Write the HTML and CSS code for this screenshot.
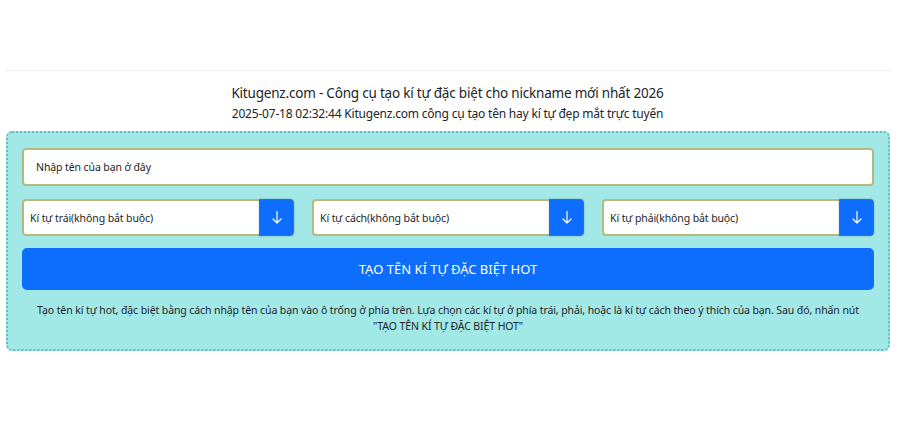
FILE: index.html
```html
<!DOCTYPE html>
<html lang="vi">
<head>
<meta charset="utf-8">
<title>Kitugenz.com</title>
<link rel="stylesheet" href="styles.css">
</head>
<body>
<div class="page">
  <hr class="rule">
  <h1 class="title">Kitugenz.com - Công cụ tạo kí tự đặc biệt cho nickname mới nhất 2026</h1>
  <p class="subtitle">2025-07-18 02:32:44 Kitugenz.com công cụ tạo tên hay kí tự đẹp mắt trực tuyến</p>
  <div class="tool">
    <input class="name-input" type="text" placeholder="Nhập tên của bạn ở đây">
    <div class="selects">
      <div class="group">
        <input class="field" type="text" placeholder="Kí tự trái(không bắt buộc)">
        <button class="arrow"><svg class="arrow-icon" viewBox="0 0 10 13" width="10" height="13"><path d="M5 0.5V12M1 8l4 4 4-4" fill="none" stroke="#fff" stroke-width="1.2" stroke-linecap="round" stroke-linejoin="round"/></svg></button>
      </div>
      <div class="group">
        <input class="field" type="text" placeholder="Kí tự cách(không bắt buộc)">
        <button class="arrow"><svg class="arrow-icon" viewBox="0 0 10 13" width="10" height="13"><path d="M5 0.5V12M1 8l4 4 4-4" fill="none" stroke="#fff" stroke-width="1.2" stroke-linecap="round" stroke-linejoin="round"/></svg></button>
      </div>
      <div class="group">
        <input class="field" type="text" placeholder="Kí tự phải(không bắt buộc)">
        <button class="arrow"><svg class="arrow-icon" viewBox="0 0 10 13" width="10" height="13"><path d="M5 0.5V12M1 8l4 4 4-4" fill="none" stroke="#fff" stroke-width="1.2" stroke-linecap="round" stroke-linejoin="round"/></svg></button>
      </div>
    </div>
    <button class="go">TẠO TÊN KÍ TỰ ĐẶC BIỆT HOT</button>
    <p class="help">Tạo tên kí tự hot, đặc biệt bằng cách nhập tên của bạn vào ô trống ở phía trên. Lựa chọn các kí tự ở phía trái, phải, hoặc là kí tự cách theo ý thích của bạn. Sau đó, nhấn nút "TẠO TÊN KÍ TỰ ĐẶC BIỆT HOT"</p>
  </div>
</div>
</body>
</html>
```
FILE: styles.css
```css
* { box-sizing: border-box; }
body {
  margin: 0;
  background: #fff;
  font-family: "Noto Sans", "Open Sans", sans-serif;
  color: #212529;
}
.page {
  padding: 70px 8px 0 5px;
}
.rule {
  margin: 0;
  border: 0;
  border-top: 1px solid #eceef0;
}
.title {
  margin: 12px 0 0;
  font-size: 13.5px;
  letter-spacing: -0.2px;
  font-weight: 400;
  text-align: center;
  line-height: 20px;
}
.subtitle {
  margin: 2px 0 0;
  font-size: 12px;
  letter-spacing: -0.2px;
  text-align: center;
  line-height: 18px;
}
.tool {
  margin: 8px 0 0 1px;
  background: #a2e8e7;
  border: 2px dotted #62bcbc;
  border-radius: 6px;
  padding: 15px 14px 15px;
}
.name-input, .field {
  display: block;
  font-family: inherit;
  font-size: 10.5px;
  letter-spacing: -0.1px;
  color: #212529;
  background: #fff;
  border: 2px solid #b4bb7c;
  border-radius: 4px;
  padding: 0 12px;
  outline: none;
}
.name-input {
  width: 100%;
  height: 38px;
}
.name-input::placeholder, .field::placeholder { color: #212529; opacity: 1; }
.selects {
  display: grid;
  grid-template-columns: repeat(3, 1fr);
  gap: 18px;
  margin-top: 13px;
}
.group {
  display: flex;
  height: 37px;
}
.field {
  flex: 1;
  min-width: 0;
  height: 100%;
  padding: 0 6px;
  border-radius: 4px 0 0 4px;
  border-right: 0;
}
.arrow {
  display: flex;
  align-items: center;
  justify-content: center;
  width: 35px;
  height: 100%;
  border: 1px solid #3f6fa6;
  border-radius: 0 4px 4px 0;
  background: #0d6efd;
  padding: 0;
  box-shadow: 0 0 2px rgba(0,0,0,0.3);
}
.arrow-icon { display: block; }
.go {
  display: block;
  width: 100%;
  height: 42px;
  margin-top: 12px;
  background: #0d6efd;
  border: 0;
  border-radius: 5px;
  color: #fff;
  font-family: inherit;
  font-size: 13px;
}
.help {
  margin: 12px 0 0;
  padding: 0 10px;
  font-size: 10.5px;
  letter-spacing: -0.1px;
  line-height: 16px;
  text-align: center;
  color: #212529;
}
```
